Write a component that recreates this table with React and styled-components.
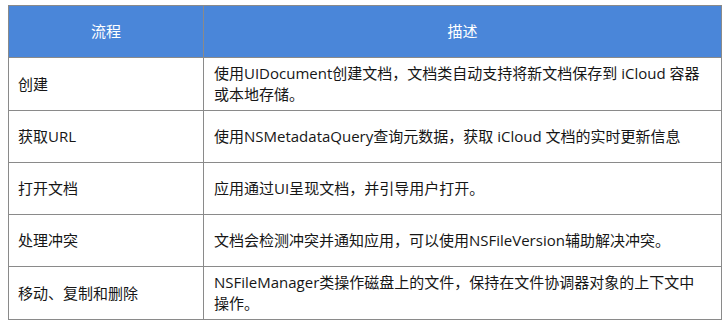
import React from "react";
import styled, { createGlobalStyle } from "styled-components";

const Global = createGlobalStyle`
  html, body { background: #ffffff; }
  body {
    margin: 5px 0 0 8px;
    font-family: "Open Sans", "Noto Sans CJK SC", sans-serif;
    color: #161616;
  }
`;

const Table = styled.table`
  width: 713px;
  border-collapse: collapse;
  table-layout: fixed;
  font-size: 15px;
  line-height: 21px;
`;

const Col = styled.col`
  width: ${(p) => p.$w}px;
`;

const HeadRow = styled.tr`
  height: 52px;
  background: #4a86d9;
`;

const HeadCell = styled.th`
  border: 1px solid #8a8a8a;
  color: #ffffff;
  font-weight: 400;
  text-align: center;
  padding: 0 10px;
`;

const Row = styled.tr`
  height: 52px;
`;

const Cell = styled.td`
  border: 1px solid #8a8a8a;
  padding: 5px ${(p) => (p.$first ? 9 : 10)}px;
  vertical-align: middle;
  text-align: left;
  white-space: pre-line;
`;

const rows = [
  ["创建", "使用UIDocument创建文档，文档类自动支持将新文档保存到 iCloud 容器\n或本地存储。"],
  ["获取URL", "使用NSMetadataQuery查询元数据，获取 iCloud 文档的实时更新信息"],
  ["打开文档", "应用通过UI呈现文档，并引导用户打开。"],
  ["处理冲突", "文档会检测冲突并通知应用，可以使用NSFileVersion辅助解决冲突。"],
  ["移动、复制和删除", "NSFileManager类操作磁盘上的文件，保持在文件协调器对象的上下文中\n操作。"],
];

export default function App() {
  return (
    <>
      <Global />
      <Table>
        <colgroup>
          <Col $w={195} />
          <Col $w={518} />
        </colgroup>
        <thead>
          <HeadRow>
            <HeadCell>流程</HeadCell>
            <HeadCell>描述</HeadCell>
          </HeadRow>
        </thead>
        <tbody>
          {rows.map(([a, b]) => (
            <Row key={a}>
              <Cell $first>{a}</Cell>
              <Cell>{b}</Cell>
            </Row>
          ))}
        </tbody>
      </Table>
    </>
  );
}
